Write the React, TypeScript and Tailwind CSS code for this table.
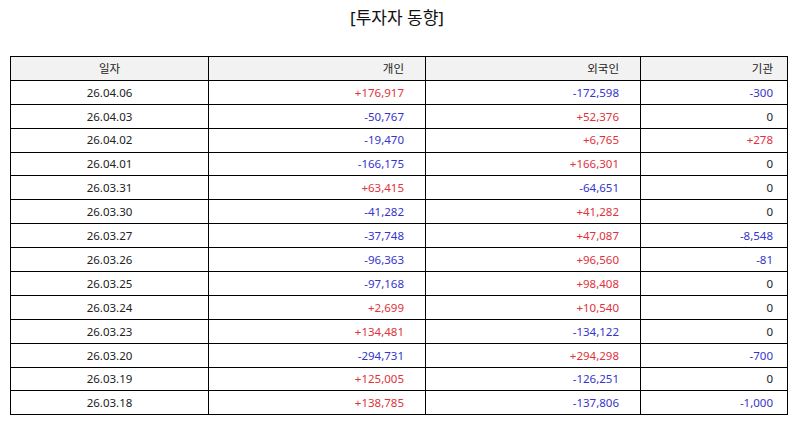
import React from "react";

const rows: [string, string, string, string][] = [
  ["26.04.06", "+176,917", "-172,598", "-300"],
  ["26.04.03", "-50,767", "+52,376", "0"],
  ["26.04.02", "-19,470", "+6,765", "+278"],
  ["26.04.01", "-166,175", "+166,301", "0"],
  ["26.03.31", "+63,415", "-64,651", "0"],
  ["26.03.30", "-41,282", "+41,282", "0"],
  ["26.03.27", "-37,748", "+47,087", "-8,548"],
  ["26.03.26", "-96,363", "+96,560", "-81"],
  ["26.03.25", "-97,168", "+98,408", "0"],
  ["26.03.24", "+2,699", "+10,540", "0"],
  ["26.03.23", "+134,481", "-134,122", "0"],
  ["26.03.20", "-294,731", "+294,298", "-700"],
  ["26.03.19", "+125,005", "-126,251", "0"],
  ["26.03.18", "+138,785", "-137,806", "-1,000"],
];

function color(v: string) {
  if (v.startsWith("+")) return "text-[#e0323c]";
  if (v.startsWith("-")) return "text-[#3434cc]";
  return "text-[#222]";
}

export default function App() {
  return (
    <div
      className="w-[794px] h-[425px] bg-white text-[#222]"
      style={{ fontFamily: '"Noto Sans", "Noto Sans CJK KR", sans-serif' }}
    >
      <div className="h-[56px] pt-[5px] text-center text-[17px] leading-[26px] text-[#111]">
        [투자자 동향]
      </div>
      <table className="ml-[10px] w-[777px] border-collapse table-fixed text-[11.5px]">
        <colgroup>
          <col className="w-[198px]" />
          <col className="w-[217px]" />
          <col className="w-[215px]" />
          <col className="w-[147px]" />
        </colgroup>
        <thead>
          <tr className="h-[23.9px] bg-[#f2f2f2]">
            <th className="border border-black font-normal text-center p-0">일자</th>
            <th className="border border-black font-normal text-right p-0 pr-[21px]">개인</th>
            <th className="border border-black font-normal text-right p-0 pr-[21px]">외국인</th>
            <th className="border border-black font-normal text-right p-0 pr-[14px]">기관</th>
          </tr>
        </thead>
        <tbody>
          {rows.map((r) => (
            <tr key={r[0]} className="h-[23.9px]">
              <td className="border border-black text-center p-0">{r[0]}</td>
              <td className={`border border-black text-right p-0 pr-[21px] ${color(r[1])}`}>{r[1]}</td>
              <td className={`border border-black text-right p-0 pr-[21px] ${color(r[2])}`}>{r[2]}</td>
              <td className={`border border-black text-right p-0 pr-[14px] ${color(r[3])}`}>{r[3]}</td>
            </tr>
          ))}
        </tbody>
      </table>
    </div>
  );
}
